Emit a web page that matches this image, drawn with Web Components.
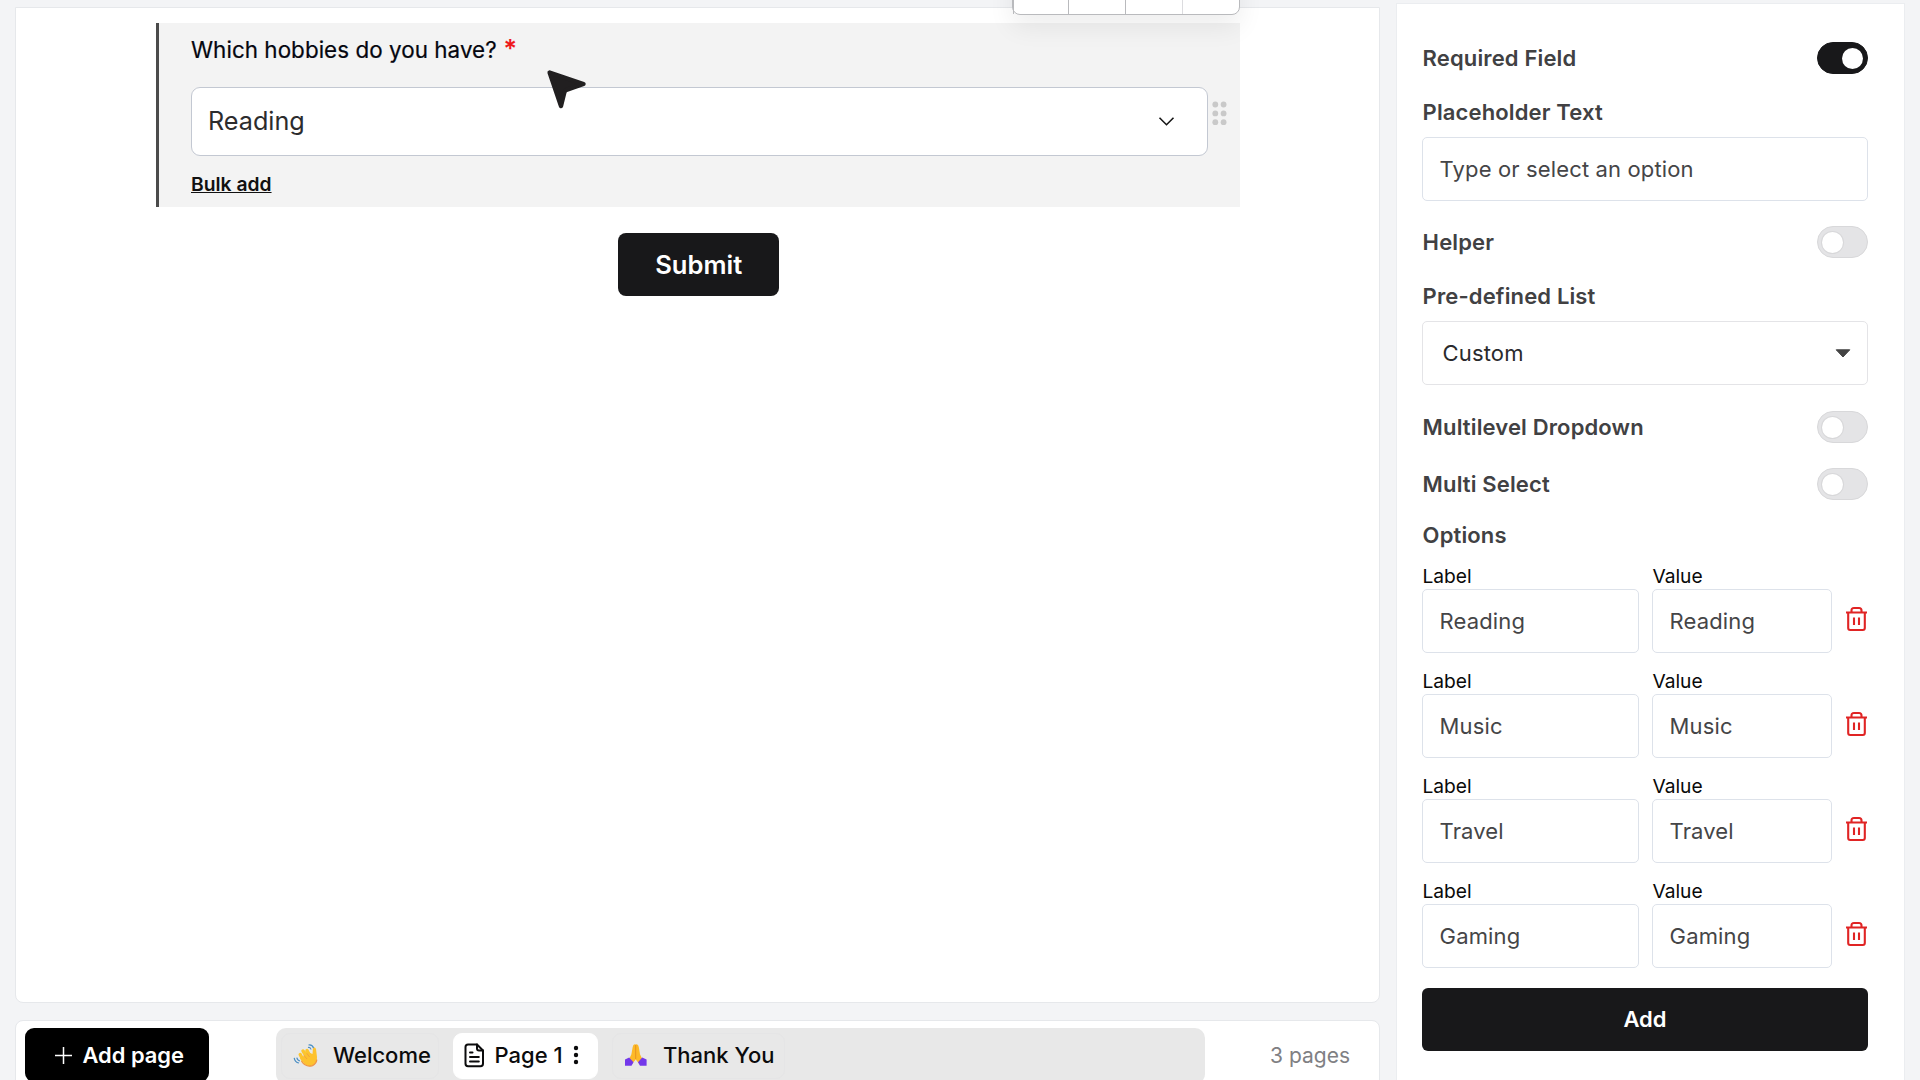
<!DOCTYPE html>
<html lang="en">
<head>
<meta charset="utf-8">
<title>Form builder</title>
<style>
	body {
		margin: 0;
		width: 1920px;
		height: 1080px;
		overflow: hidden;
		font-family: Inter, "Liberation Sans", sans-serif;
		background: #f3f4f6;
	}
</style>
</head>
<body>
<form-builder></form-builder>
<script>
class BaseElement extends HTMLElement {
	connectedCallback() {
		if (this.shadowRoot) return;
		this.attachShadow({ mode: "open" });
		this.shadowRoot.innerHTML = this.render();
	}
}

class FormBuilder extends BaseElement {
	render() {
		return `
            <style>
                :host {
                    display: flex;
                    gap: 16px;
                    height: 1080px;
                    padding: 0 15px;
                    box-sizing: border-box;
                }
                .left {
                    display: flex;
                    flex-direction: column;
                    flex: none;
                    gap: 17px;
                    width: 1365px;
                    padding-top: 7px;
                    box-sizing: border-box;
                }
            </style>
            <div class="left">
                <form-canvas></form-canvas>
                <page-bar></page-bar>
            </div>
            <settings-panel></settings-panel>`;
	}
}

class FormCanvas extends BaseElement {
	render() {
		return `
            <style>
                :host {
                    position: relative;
                    display: flex;
                    flex-direction: column;
                    align-items: center;
                    flex: none;
                    height: 996px;
                    padding-top: 15px;
                    box-sizing: border-box;
                    background: #fff;
                    border: 1px solid #e6e8eb;
                    border-radius: 0 0 8px 8px;
                }
                button {
                    width: 161px;
                    height: 63px;
                    margin-top: 25.5px;
                    margin-left: 2.5px;
                    padding: 0;
                    border: 0;
                    border-radius: 8px;
                    background: #18181a;
                    color: #fff;
                    font: 600 25.6px Inter, sans-serif;
                }
                .cursor {
                    position: absolute;
                    left: 528.5px;
                    top: 60px;
                }
            </style>
            <dropdown-field label="Which hobbies do you have?" value="Reading"></dropdown-field>
            <button><span>Submit</span></button>
            <field-toolbar></field-toolbar>
            <svg class="cursor" width="44" height="44" viewBox="0 0 44 44">
                <path d="M4.6 4.5 L38.5 16 L21.5 21.8 Q20 22.5 19.4 24.2 L16 38 Z" fill="#211f20" stroke="#211f20" stroke-width="4.4" stroke-linejoin="round"/>
            </svg>`;
	}
}

class FieldToolbar extends BaseElement {
	render() {
		return `
            <style>
                :host {
                    position: absolute;
                    top: -41px;
                    left: 996px;
                    display: grid;
                    grid-template-columns: 55px 57px 57px 1fr;
                    width: 228px;
                    height: 48px;
                    box-sizing: border-box;
                    background: #fff;
                    border: 1px solid #b9babd;
                    border-radius: 8px;
                    box-shadow: 0 12px 26px rgba(0, 0, 0, .07);
                }
                i { border-left: 1px solid #b9babd; }
                i:first-child { border: 0; }
                i:last-child { border-color: #dcdcdf; }
            </style>
            <i></i><i></i><i></i><i></i>`;
	}
}

class DropdownField extends BaseElement {
	render() {
		return `
            <style>
                :host {
                    display: block;
                    width: 1084px;
                    height: 184px;
                    padding: 12px 0 0 32px;
                    box-sizing: border-box;
                    background: #f3f3f3;
                    border-left: 3px solid #4b4b4b;
                    margin-right: -1px;
                }
                label {
                    display: flex;
                    gap: 7px;
                    height: 30px;
                    line-height: 30px;
                    font-size: 22.4px;
                    letter-spacing: .05px;
                    color: #05060f;
                    -webkit-text-stroke: .2px currentColor;
                }
                sup { color: #ee1517; font-size: 25px; font-weight: 500; line-height: 28px; }
                .row { display: flex; gap: 4px; margin-top: 22px; }
                .select {
                    display: flex;
                    align-items: center;
                    justify-content: space-between;
                    width: 1017px;
                    height: 69px;
                    padding: 0 32px 1px 16px;
                    box-sizing: border-box;
                    background: #fff;
                    border: 1px solid #c3c8d2;
                    border-radius: 9px;
                    font-size: 25.2px;
                    color: #2c2c2e;
                }
                .grip { margin-top: 14px; }
                a {
                    display: inline-block;
                    margin-top: 15.5px;
                    line-height: 24px;
                    font-size: 19.3px;
                    font-weight: 600;
                    color: #111;
                    text-decoration: underline;
                }
            </style>
            <label><span>${this.getAttribute("label")}</span><sup>*</sup></label>
            <div class="row">
                <div class="select">
                    <span>${this.getAttribute("value")}</span>
                    <svg width="17" height="11" viewBox="0 0 17 11"><path d="M1.5 1.7 L8.5 8.7 L15.5 1.7" fill="none" stroke="#151515" stroke-width="1.6"/></svg>
                </div>
                <svg class="grip" width="16" height="26" viewBox="0 0 16 26" fill="#c9c9c9">
                    <circle cx="3.3" cy="3.5" r="2.9"/><circle cx="11.6" cy="3.5" r="2.9"/>
                    <circle cx="3.3" cy="12.4" r="2.9"/><circle cx="11.6" cy="12.4" r="2.9"/>
                    <circle cx="3.3" cy="21.2" r="2.9"/><circle cx="11.6" cy="21.2" r="2.9"/>
                </svg>
            </div>
            <a>Bulk add</a>`;
	}
}

class PageBar extends BaseElement {
	render() {
		return `
            <style>
                :host {
                    display: flex;
                    flex: none;
                    height: 70px;
                    padding: 7px 29px 0 8.5px;
                    box-sizing: border-box;
                    background: #fff;
                    border: 1px solid #e6e8eb;
                    border-radius: 8px;
                }
                button {
                    display: flex;
                    align-items: center;
                    gap: 10px;
                    width: 184.5px;
                    height: 54px;
                    padding: 0 0 0 29px;
                    border: 0;
                    border-radius: 9px;
                    background: #000;
                    color: #fff;
                    font: 600 21.9px Inter, sans-serif;
                    white-space: nowrap;
                }
                .tabs {
                    display: flex;
                    gap: 14px;
                    width: 929.5px;
                    height: 56px;
                    margin-left: 66.5px;
                    padding: 5px;
                    box-sizing: border-box;
                    background: #e8e8e8;
                    border-radius: 10px;
                }
                .count {
                    margin-left: auto;
                    line-height: 56px;
                    font-size: 21px;
                    color: #808083;
                }
            </style>
            <button>
                <svg width="19" height="19" viewBox="0 0 19 19"><path d="M9.5 1V18M1 9.5H18" stroke="#fff" stroke-width="1.5"/></svg>
                <span>Add page</span>
            </button>
            <div class="tabs">
                <page-tab name="Welcome" style="--w:158px;--pad:11px;--gap:15.5px">
                    <svg width="25" height="25" viewBox="0 0 25 25">
                        <path d="M7.2 11.4 L10 17 M10 8 L14 14 M14 7.6 L17 13" stroke="#fcc62f" stroke-width="3.4" stroke-linecap="round"/>
                        <path d="M7 15.5 L16 9.5 L19.5 11 L20 4.6 Q22 3.4 23 6 L24 14 Q24.3 20 19.5 22.5 Q14.5 24.3 11.5 21 Z" fill="#fdc22f"/>
                        <path d="M8.4 18 Q12.6 24.6 19.5 22.6 Q23.3 20.6 23.8 16.6" fill="none" stroke="#ef9645" stroke-width="1.3"/>
                        <path d="M10.4 11.8 L14 16 M13.7 10.2 L16.6 14" stroke="#ef9645" stroke-width=".7"/>
                        <path d="M15.5 2 Q19.5 1.4 20.5 5 M15 4.5 Q17.5 4 18 6.5 M1.2 14.8 Q1.8 19.2 6 20 M3.8 14.7 Q4.4 17.5 7 18" fill="none" stroke="#4b8fc4" stroke-width="1.2"/>
                    </svg>
                </page-tab>
                <page-tab name="Page 1" active menu style="--w:145px;--pad:10px;--gap:10px">
                    <svg width="21" height="25" viewBox="0 0 21 25" fill="none" stroke="#0b0b0c" stroke-width="2" stroke-linejoin="round" stroke-linecap="round">
                        <path d="M4 1.5H13L19 7.5V20.5Q19 23.3 16.5 23.3H4Q1.5 23.3 1.5 20.5V4Q1.5 1.5 4 1.5Z"/>
                        <path d="M13 1.5V5.5Q13 7.5 15 7.5H19M6 9.5H8.5M6 14H14.8M6 18.5H14.8"/>
                    </svg>
                </page-tab>
                <page-tab name="Thank You" style="--w:173px;--pad:11px;--gap:15.5px">
                    <svg width="24" height="24" viewBox="0 0 24 24">
                        <path d="M11.7 1.5 Q9.2 .6 8.7 4 L7.4 11.3 L4.5 17.5 L8 21 L11.7 16.5 L15.4 21 L19 17.5 L16 11.3 L14.8 4 Q14.2 .6 11.7 1.5Z" fill="#fdb927"/>
                        <path d="M11.7 2V16" stroke="#e4901f" stroke-width=".9"/>
                        <path d="M1 16.5 L5.2 14.6 L9.5 19.2 L7.5 22.8 H1Z M22.6 16.5 L18.2 14.6 L14 19.2 L16 22.8 H22.6Z" fill="#7338ea"/>
                    </svg>
                </page-tab>
            </div>
            <span class="count">3 pages</span>`;
	}
}

class PageTab extends BaseElement {
	render() {
		const dots = this.hasAttribute("menu")
			? `<svg class="menu" width="6" height="20" viewBox="0 0 6 20" fill="#0b0b0c"><circle cx="3" cy="3" r="2.2"/><circle cx="3" cy="10" r="2.2"/><circle cx="3" cy="17" r="2.2"/></svg>`
			: "";
		return `
            <style>
                :host {
                    display: flex;
                    align-items: center;
                    gap: var(--gap);
                    width: var(--w);
                    height: 46px;
                    padding: 0 0 2px var(--pad);
                    box-sizing: border-box;
                    border: 1px solid #e5e5e6;
                    border-radius: 9px;
                    font-size: 22px;
                    font-weight: 500;
                    color: #0b0b0c;
                    white-space: nowrap;
                }
                :host([active]) { background: #fff; border-color: #fff; }
                ::slotted(svg) { flex: none; }
                .menu { flex: none; }
            </style>
            <slot></slot><span>${this.getAttribute("name")}</span>${dots}`;
	}
}

class SettingsPanel extends BaseElement {
	render() {
		const options = ["Reading", "Music", "Travel", "Gaming"];
		return `
            <style>
                :host {
                    display: flex;
                    flex-direction: column;
                    flex: none;
                    width: 509px;
                    height: 1100px;
                    margin-top: 3px;
                    padding: 38px 36px 0 25px;
                    box-sizing: border-box;
                    background: #fff;
                    border: 1px solid #ebedf0;
                }
                setting-row + h4, text-box + setting-row { margin-top: 25px; }
                setting-row + setting-row { margin-top: 25px; }
                h4 {
                    margin: 0;
                    padding-left: .6px;
                    line-height: 26px;
                    font-size: 22px;
                    font-weight: 600;
                    letter-spacing: .14px;
                    color: #414143;
                }
                text-box { margin-top: 12px; }
                .multi { margin-top: 26px !important; }
                .options { margin: 22px 0 15.5px !important; }
                .list { display: flex; flex-direction: column; gap: 16px; }
                button {
                    flex: none;
                    height: 63px;
                    margin-top: 20px;
                    border: 0;
                    border-radius: 6px;
                    background: #18181a;
                    color: #fff;
                    font: 600 22px Inter, sans-serif;
                }
            </style>
            <setting-row on>Required Field</setting-row>
            <h4><span>Placeholder Text</span></h4>
            <text-box>Type or select an option</text-box>
            <setting-row>Helper</setting-row>
            <h4><span>Pre-defined List</span></h4>
            <text-box select>Custom</text-box>
            <setting-row class="multi">Multilevel Dropdown</setting-row>
            <setting-row>Multi Select</setting-row>
            <h4 class="options"><span>Options</span></h4>
            <div class="list">
                ${options.map((o) => `<option-row value="${o}"></option-row>`).join("")}
            </div>
            <button><span>Add</span></button>`;
	}
}

class SettingRow extends BaseElement {
	render() {
		return `
            <style>
                :host {
                    display: flex;
                    align-items: center;
                    justify-content: space-between;
                    flex: none;
                    height: 32px;
                    padding-left: .6px;
                    font-size: 22px;
                    font-weight: 600;
                    letter-spacing: .14px;
                    color: #414143;
                }
                .switch {
                    display: flex;
                    align-items: center;
                    width: 51px;
                    height: 32px;
                    padding: 0 4px;
                    box-sizing: border-box;
                    border: 1px solid #d8d8da;
                    border-radius: 16px;
                    background: #e4e4e6;
                }
                .switch i {
                    width: 21px;
                    height: 21px;
                    border-radius: 50%;
                    background: #fff;
                    box-shadow: 0 0 0 1px #d8d8da;
                }
                :host([on]) .switch { justify-content: flex-end; background: #18181a; border-color: #18181a; }
                :host([on]) i { box-shadow: none; }
            </style>
            <span><slot></slot></span><div class="switch"><i></i></div>`;
	}
}

class TextBox extends BaseElement {
	render() {
		const arrow = this.hasAttribute("select")
			? `<svg width="16" height="9" viewBox="0 0 16 9"><path d="M1.2 .8H14.8L8 8Z" fill="#444" stroke="#444" stroke-linejoin="round"/></svg>`
			: "";
		return `
            <style>
                :host {
                    display: flex;
                    align-items: center;
                    justify-content: space-between;
                    flex: none;
                    height: 64px;
                    padding: 0 16px 0 16.6px;
                    box-sizing: border-box;
                    border: 1px solid #dde2ea;
                    border-radius: 5px;
                    font-size: 22px;
                    letter-spacing: .14px;
                    color: #454547;
                }
                :host([select]) { padding-left: 19.6px; border-color: #e4e4e7; color: #2a2a2c; }
            </style>
            <span><slot></slot></span>${arrow}`;
	}
}

class OptionRow extends BaseElement {
	render() {
		const value = this.getAttribute("value");
		return `
            <style>
                :host { display: flex; gap: 13px; height: 89px; }
                .col { display: flex; flex-direction: column; width: 217px; }
                .col + .col { width: 180px; }
                label { line-height: 24px; margin-bottom: 1.5px; padding-left: .4px; font-size: 19.2px; color: #0a0a0a; }
                svg { margin-top: 42px; }
            </style>
            <div class="col"><label><span>Label</span></label><text-box>${value}</text-box></div>
            <div class="col"><label><span>Value</span></label><text-box>${value}</text-box></div>
            <svg width="23" height="26" viewBox="0 0 23 26" fill="none" stroke="#e02424" stroke-width="2.1">
                <path d="M1 6.5H22M3.2 6.5V22Q3.2 24 5.2 24H17.8Q19.8 24 19.8 22V6.5M6.5 6V4.5Q6.5 2 9 2H14Q16.5 2 16.5 4.5V6M9 11.5V19M14 11.5V19"/>
            </svg>`;
	}
}

customElements.define("form-builder", FormBuilder);
customElements.define("form-canvas", FormCanvas);
customElements.define("field-toolbar", FieldToolbar);
customElements.define("dropdown-field", DropdownField);
customElements.define("page-bar", PageBar);
customElements.define("page-tab", PageTab);
customElements.define("settings-panel", SettingsPanel);
customElements.define("setting-row", SettingRow);
customElements.define("text-box", TextBox);
customElements.define("option-row", OptionRow);
</script>
</body>
</html>
